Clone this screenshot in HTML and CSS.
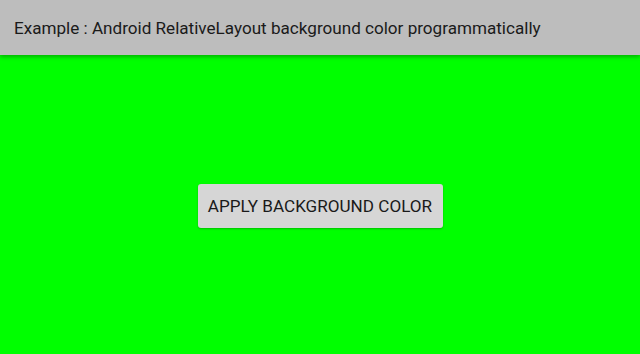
FILE: index.html
```html
<!DOCTYPE html>
<html lang="en">
<head>
    <meta charset="UTF-8">
    <title>Example</title>
    <link rel="stylesheet" href="styles.css">
</head>
<body>
    <div class="toolbar">
        <span class="toolbar-title">Example : Android RelativeLayout background color programmatically</span>
    </div>
    <div class="content">
        <button class="apply-button">APPLY BACKGROUND COLOR</button>
    </div>
</body>
</html>
```

FILE: styles.css
```css
body {
    margin: 0;
    padding: 0;
    font-family: Roboto, "Liberation Sans", sans-serif;
    background-color: #00ff00;
    height: 100vh;
    display: flex;
    flex-direction: column;
    overflow: hidden;
}

/* top bar */
.toolbar {
    height: 55px;
    background-color: #bdbdbd;
    display: flex;
    align-items: center;
    padding-left: 14px;
    box-shadow: 0 2px 4px rgba(0, 0, 0, 0.3);
    position: relative;
    z-index: 1;
}

.toolbar-title {
    font-size: 17.1px;
    color: #1a1a1a;
}

.content {
    flex: 1;
    display: flex;
    justify-content: center;
    align-items: center;
    padding-top: 3px;
}

.apply-button {
    font-family: Roboto, "Liberation Sans", sans-serif;
    font-size: 17.1px;
    color: #1a1a1a;
    background-color: #d6d6d6;
    border: none;
    border-radius: 3px;
    width: 245px;
    height: 44px;
    padding: 0;
    box-shadow: 0 1px 2px rgba(0, 0, 0, 0.25);
}
```
